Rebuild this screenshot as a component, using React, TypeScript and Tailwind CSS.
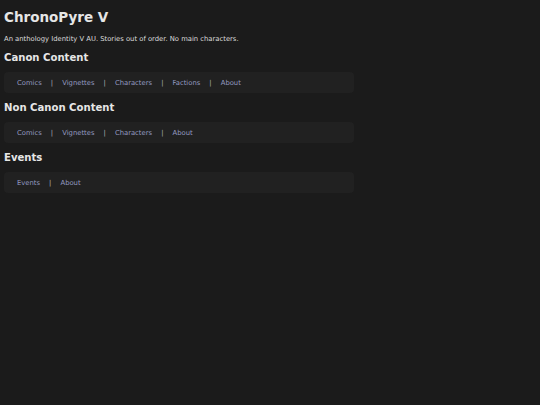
import React from "react";

const sections = [
  { title: "Canon Content", links: ["Comics", "Vignettes", "Characters", "Factions", "About"] },
  { title: "Non Canon Content", links: ["Comics", "Vignettes", "Characters", "About"] },
  { title: "Events", links: ["Events", "About"] },
];

function NavBar({ links }: { links: string[] }) {
  return (
    <nav className="flex h-[21px] w-[350px] items-center rounded-[4px] bg-[#212121] pl-[13px] pt-[1px] text-[6.8px] leading-none">
      {links.map((l, i) => (
        <React.Fragment key={l}>
          {i > 0 && <span className="px-[9.1px] text-[#b5b5b5]">|</span>}
          <a className="text-[#939ac0]">{l}</a>
        </React.Fragment>
      ))}
    </nav>
  );
}

export default function App() {
  return (
    <div className="min-h-[405px] w-full bg-[#1b1b1b] px-[4px] pt-[9px] text-[#e6e6e6] [font-family:'DejaVu_Sans',sans-serif]">
      <h1 className="text-[13.5px] font-bold leading-[16px]">ChronoPyre V</h1>
      <p className="mt-[10px] text-[6.8px] leading-[8px] text-[#dcdcdc]">
        An anthology Identity V AU. Stories out of order. No main characters.
      </p>
      {sections.map((s) => (
        <section key={s.title}>
          <h2 className="mt-[8px] text-[10.1px] font-bold leading-[13px]">{s.title}</h2>
          <div className="mt-[8px]">
            <NavBar links={s.links} />
          </div>
        </section>
      ))}
    </div>
  );
}
